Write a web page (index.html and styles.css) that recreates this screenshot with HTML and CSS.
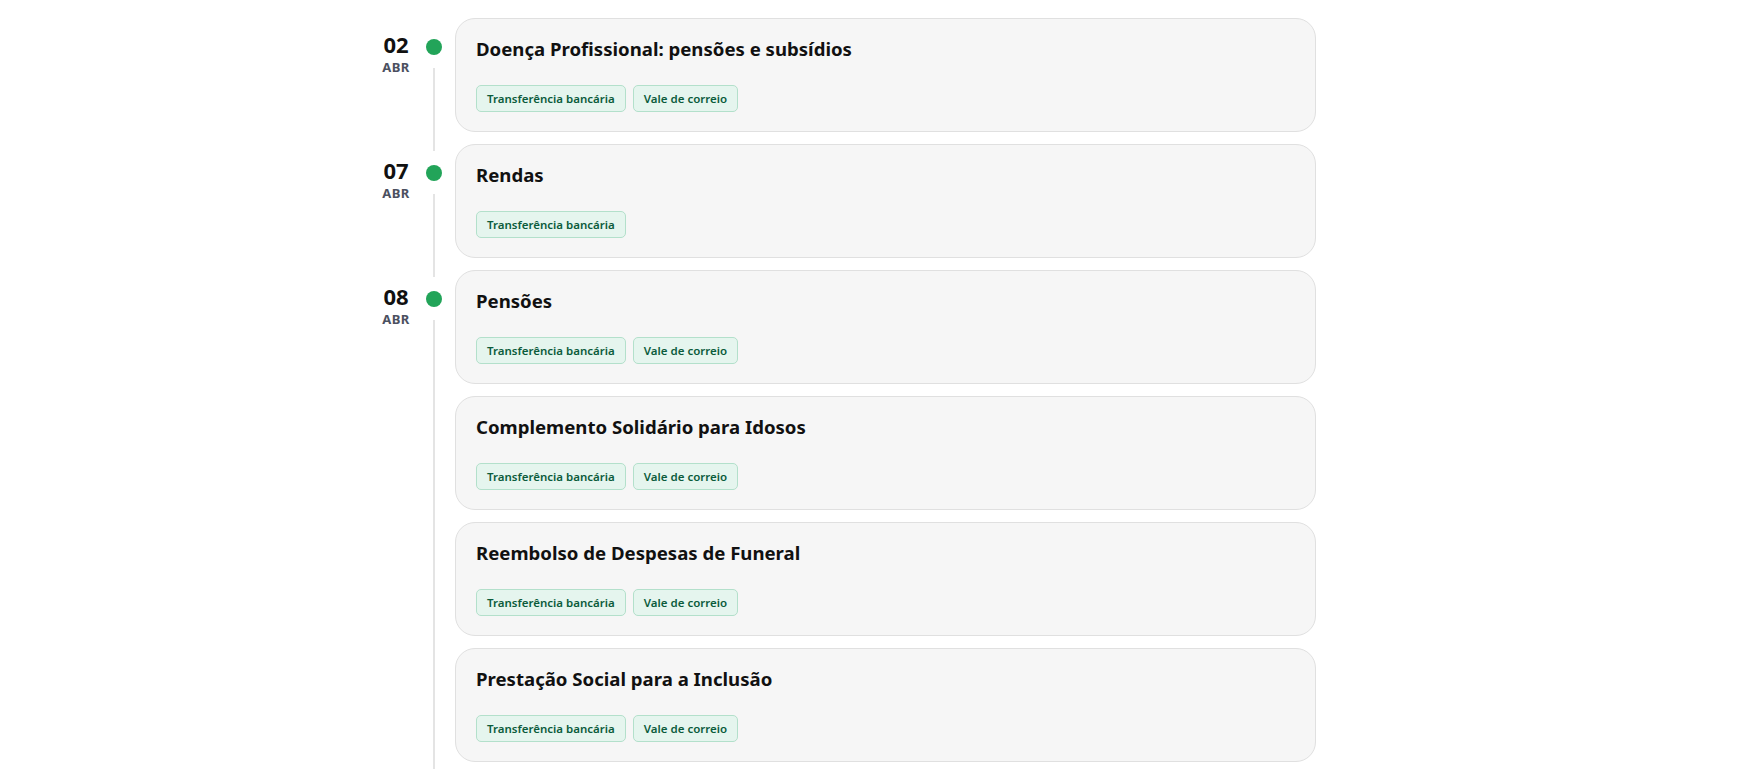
FILE: index.html
```html
<!DOCTYPE html>
<html lang="pt">
<head>
  <meta charset="UTF-8">
  <meta name="viewport" content="width=device-width, initial-scale=1.0">
  <title>Calendário de pagamentos</title>
  <link rel="stylesheet" href="styles.css">
</head>
<body>
  <div class="timeline">

    <section class="day">
      <div class="date"><strong>02</strong><span>ABR</span></div>
      <div class="rail"><span class="dot"></span><span class="line"></span></div>
      <div class="cards">
        <div class="card">
          <h3>Doença Profissional: pensões e subsídios</h3>
          <div class="tags">
            <span class="tag">Transferência bancária</span>
            <span class="tag">Vale de correio</span>
          </div>
        </div>
      </div>
    </section>

    <section class="day">
      <div class="date"><strong>07</strong><span>ABR</span></div>
      <div class="rail"><span class="dot"></span><span class="line"></span></div>
      <div class="cards">
        <div class="card">
          <h3>Rendas</h3>
          <div class="tags">
            <span class="tag">Transferência bancária</span>
          </div>
        </div>
      </div>
    </section>

    <section class="day">
      <div class="date"><strong>08</strong><span>ABR</span></div>
      <div class="rail"><span class="dot"></span><span class="line"></span></div>
      <div class="cards">
        <div class="card">
          <h3>Pensões</h3>
          <div class="tags">
            <span class="tag">Transferência bancária</span>
            <span class="tag">Vale de correio</span>
          </div>
        </div>
        <div class="card">
          <h3>Complemento Solidário para Idosos</h3>
          <div class="tags">
            <span class="tag">Transferência bancária</span>
            <span class="tag">Vale de correio</span>
          </div>
        </div>
        <div class="card">
          <h3>Reembolso de Despesas de Funeral</h3>
          <div class="tags">
            <span class="tag">Transferência bancária</span>
            <span class="tag">Vale de correio</span>
          </div>
        </div>
        <div class="card">
          <h3>Prestação Social para a Inclusão</h3>
          <div class="tags">
            <span class="tag">Transferência bancária</span>
            <span class="tag">Vale de correio</span>
          </div>
        </div>
      </div>
    </section>

  </div>
</body>
</html>
```

FILE: styles.css
```css
*{
  margin: 0;
  padding: 0;
  box-sizing: border-box;
}

body{
  font-family: "Noto Sans", "Open Sans", sans-serif;
  color: #111;
  background: #fff;
}

.timeline{
  width: 1000px;
  margin: 0 auto;
  padding: 18px 56px 40px 0;
  display: flex;
  flex-direction: column;
  gap: 12px;
}

.day{
  display: grid;
  grid-template-columns: 48px 35px 1fr;
}

/* dia + mês */
.date{
  padding-top: 14px;
  text-align: center;
}

.date strong{
  display: block;
  font-size: 22px;
  line-height: 24px;
  font-weight: 700;
  color: #111;
}

.date span{
  display: block;
  margin-top: 3px;
  font-size: 13px;
  line-height: 16px;
  font-weight: 700;
  letter-spacing: 0.5px;
  color: #4b5060;
}

/* linha vertical com o ponto verde */
.rail{
  display: flex;
  flex-direction: column;
  align-items: center;
  padding: 21px 7px 0 0;
}

.rail .dot{
  width: 16px;
  height: 16px;
  border-radius: 50%;
  background-color: #22a459;
  flex-shrink: 0;
}

.rail .line{
  flex: 1;
  width: 2px;
  margin-top: 13px;
  margin-bottom: -19px;
  background-color: #e4e4e4;
}

.cards{
  display: flex;
  flex-direction: column;
  gap: 12px;
}

.card{
  height: 114px;
  padding: 17px 20px 19px;
  background-color: #f6f6f6;
  border: 1px solid #e0e0e0;
  border-radius: 20px;
}

.card h3{
  font-size: 18.6px;
  line-height: 25px;
  font-weight: 700;
  color: #111;
}

.tags{
  display: flex;
  gap: 7px;
  margin-top: 24px;
}

.tag{
  display: inline-block;
  height: 27px;
  padding: 0 10px;
  font-size: 11.5px;
  line-height: 25px;
  font-weight: 600;
  color: #0c5c3c;
  background-color: #e5f5ee;
  border: 1px solid #b3e0cb;
  border-radius: 5px;
}
```
